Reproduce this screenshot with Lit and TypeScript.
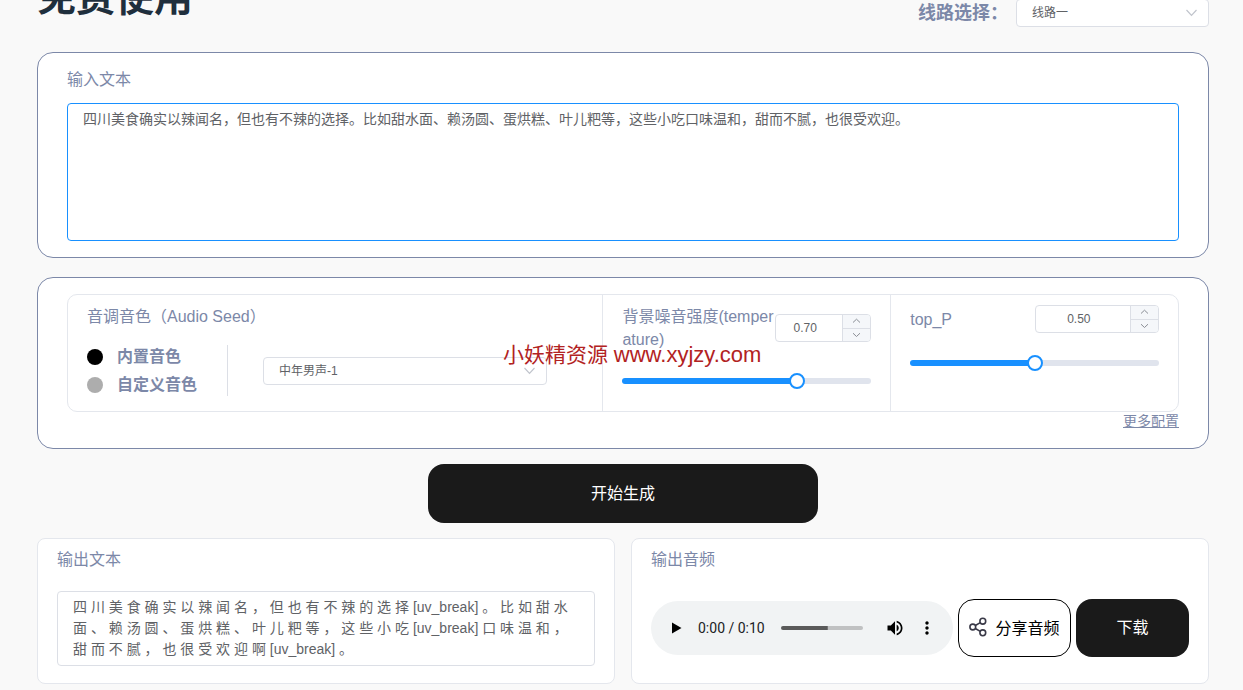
import { LitElement, html, css } from "lit";
import { customElement, property, state } from "lit/decorators.js";

const INPUT_TEXT =
  "四川美食确实以辣闻名，但也有不辣的选择。比如甜水面、赖汤圆、蛋烘糕、叶儿粑等，这些小吃口味温和，甜而不腻，也很受欢迎。";
const OUTPUT_TEXT =
  "四 川 美 食 确 实 以 辣 闻 名 ， 但 也 有 不 辣 的 选 择 [uv_break] 。 比 如 甜 水 面 、 赖 汤 圆 、 蛋 烘 糕 、 叶 儿 粑 等 ， 这 些 小 吃 [uv_break] 口 味 温 和 ， 甜 而 不 腻 ， 也 很 受 欢 迎 啊 [uv_break] 。";

const base = css`
  * {
    box-sizing: border-box;
  }
  button,
  input,
  select,
  textarea {
    font-family: inherit;
    margin: 0;
  }
`;

@customElement("param-slider")
export class ParamSlider extends LitElement {
  @property() label = "";
  @property({ type: Number }) value = 0.5;
  @property({ type: Boolean }) narrow = false;

  static styles = [
    base,
    css`
      :host {
        display: block;
        padding: 10px 19px;
      }
      .row {
        display: flex;
        align-items: center;
        margin-bottom: 27px;
      }
      .label {
        flex: 1;
        min-width: 0;
        font-size: 16px;
        line-height: 23px;
        color: #7c88a8;
        word-break: break-all;
      }
      .number {
        display: flex;
        width: 50%;
        height: 28px;
        border: 1px solid #dcdfe6;
        border-radius: 4px;
        background: #fff;
        overflow: hidden;
      }
      .number.narrow {
        width: 96px;
      }
      .field {
        flex: 1;
        min-width: 0;
        border: 0;
        outline: 0;
        padding: 0 8px 0 0;
        text-align: center;
        font-size: 12px;
        color: #606266;
        background: transparent;
      }
      .steps {
        display: grid;
        width: 28px;
        border-left: 1px solid #dcdfe6;
      }
      .step {
        display: flex;
        align-items: center;
        justify-content: center;
        padding: 0;
        border: 0;
        background: #f5f7fa;
      }
      .step + .step {
        border-top: 1px solid #dcdfe6;
      }
      .track {
        height: 6px;
        border-radius: 3px;
        background: linear-gradient(#1890ff, #1890ff) 0 0 / var(--fill) 100% no-repeat #e0e4ed;
      }
      .range {
        display: block;
        appearance: none;
        width: calc(100% + 16px);
        height: 16px;
        margin: 0 -8px;
        position: relative;
        top: -5px;
        background: transparent;
      }
      .range::-webkit-slider-thumb {
        appearance: none;
        width: 16px;
        height: 16px;
        border: 2px solid #1890ff;
        border-radius: 50%;
        background: #fff;
      }
    `,
  ];

  private shift(by: number) {
    this.value = Math.min(1, Math.max(0, this.value + by));
  }

  render() {
    return html`
      <div class="row">
        <label class="label" for="field">${this.label}</label>
        <div class="number ${this.narrow ? "narrow" : ""}">
          <input id="field" class="field" type="text" inputmode="decimal" .value=${this.value.toFixed(2)} />
          <div class="steps">
            <button class="step" aria-label="增加" @click=${() => this.shift(0.01)}>
              <svg width="9" height="6" viewBox="0 0 9 6" fill="none" stroke="#8a8d94"><path d="M1 4.5 4.5 1.2 8 4.5" /></svg>
            </button>
            <button class="step" aria-label="减少" @click=${() => this.shift(-0.01)}>
              <svg width="9" height="6" viewBox="0 0 9 6" fill="none" stroke="#8a8d94"><path d="M1 1.2 4.5 4.5 8 1.2" /></svg>
            </button>
          </div>
        </div>
      </div>
      <div class="track" style="--fill:${this.value * 100}%">
        <input
          class="range"
          type="range"
          min="0"
          max="1"
          step="0.01"
          aria-label=${this.label}
          .value=${String(this.value)}
          @input=${(e: Event) => (this.value = Number((e.target as HTMLInputElement).value))}
        />
      </div>
    `;
  }
}

@customElement("audio-bar")
export class AudioBar extends LitElement {
  static styles = [
    base,
    css`
      :host {
        display: flex;
        align-items: center;
        height: 54px;
        padding: 0 10px;
        border-radius: 27px;
        background: #f1f3f4;
      }
      .icon {
        display: flex;
        align-items: center;
        justify-content: center;
        width: 32px;
        height: 32px;
        padding: 0;
        border: 0;
        background: none;
      }
      .time {
        margin: 0 16px 0 5px;
        font-family: Roboto, sans-serif;
        font-size: 14px;
        color: #202124;
        white-space: nowrap;
      }
      .seek {
        flex: 1;
        min-width: 0;
        appearance: none;
        height: 4px;
        margin: 0 16px 0 0;
        border-radius: 2px;
        background: linear-gradient(#5a5a5a, #5a5a5a) 0 0 / 57% 100% no-repeat #c0c1c2;
      }
      .seek::-webkit-slider-thumb {
        appearance: none;
        width: 4px;
        height: 4px;
        background: transparent;
      }
    `,
  ];

  render() {
    return html`
      <button class="icon" aria-label="播放">
        <svg width="10" height="12" viewBox="0 0 10 12"><path d="M0 0.5v11L9.500 6z" /></svg>
      </button>
      <span class="time">0:00 / 0:10</span>
      <input class="seek" type="range" min="0" max="10" value="0" aria-label="进度" />
      <button class="icon" aria-label="音量">
        <svg width="20" height="20" viewBox="0 0 24 24">
          <path
            d="M3 9v6h4l5 5V4L7 9H3zm13.500 3c0-1.770-1.020-3.290-2.500-4.030v8.050c1.480-.730 2.500-2.250 2.500-4.020zM14 3.230v2.060c2.890.860 5 3.540 5 6.710s-2.110 5.850-5 6.710v2.060c4.010-.910 7-4.490 7-8.770s-2.990-7.860-7-8.770z"
          />
        </svg>
      </button>
      <button class="icon" aria-label="更多">
        <svg width="20" height="20" viewBox="0 0 24 24">
          <path
            d="M12 8c1.100 0 2-.900 2-2s-.900-2-2-2-2 .900-2 2 .900 2 2 2zm0 2c-1.100 0-2 .900-2 2s.900 2 2 2 2-.900 2-2-.900-2-2-2zm0 6c-1.100 0-2 .900-2 2s.900 2 2 2 2-.900 2-2-.900-2-2-2z"
          />
        </svg>
      </button>
    `;
  }
}

@customElement("app-root")
export class AppRoot extends LitElement {
  @state() private source = "builtin";

  static styles = [
    base,
    css`
      :host {
        display: block;
        position: relative;
        min-height: 100vh;
        overflow: hidden;
        padding: 0 34px 6px 37px;
        background: #f9f9f9;
        color: #7c88a8;
        font-family: "Liberation Sans", "Noto Sans CJK SC", sans-serif;
        font-size: 16px;
        line-height: 22px;
      }
      .header {
        display: flex;
        justify-content: space-between;
        align-items: flex-end;
        margin: -32px 0 25px;
      }
      .title {
        margin: 0;
        font-size: 39px;
        line-height: 59px;
        font-weight: 700;
        color: #1f2f3d;
      }
      .line {
        display: flex;
        align-items: center;
        gap: 8px;
      }
      .line-label {
        font-size: 18px;
        font-weight: 700;
      }
      .select {
        appearance: none;
        display: block;
        width: 100%;
        height: 28px;
        padding: 0 30px 0 15px;
        border: 1px solid #dcdfe6;
        border-radius: 4px;
        outline: 0;
        background: #fff;
        font-size: 12px;
        color: #606266;
      }
      .select-box {
        display: grid;
        align-items: center;
      }
      .select-box > * {
        grid-area: 1 / 1;
      }
      .select-box svg {
        justify-self: end;
        margin-right: 11px;
        pointer-events: none;
      }
      .line .select-box {
        width: 193px;
      }
      .panel {
        border: 1px solid #7c88a8;
        border-radius: 16px;
        background: #fff;
        padding: 16px 29px;
      }
      .caption {
        display: block;
      }
      .text {
        display: block;
        width: 100%;
        resize: none;
        outline: 0;
        overflow: hidden;
        padding: 5px 15px;
        border: 1px solid #dcdfe6;
        border-radius: 4px;
        background: #fff;
        font-size: 14px;
        line-height: 21px;
        color: #606266;
      }
      .text.source {
        height: 138px;
        margin-top: 12px;
        border-color: #1890ff;
      }
      .text.result {
        height: 75px;
        margin-top: 20px;
      }
      .settings {
        margin-top: 19px;
        padding-bottom: 17px;
      }
      .grid {
        display: grid;
        grid-template-columns: 13fr 7fr 7fr;
        border: 1px solid #e4e7ed;
        border-radius: 10px;
      }
      .grid > * + * {
        border-left: 1px solid #e4e7ed;
      }
      .voice {
        padding: 11px 55px 15px 19px;
      }
      .voice-row {
        display: flex;
        align-items: center;
        margin-top: 17px;
      }
      .radios {
        display: grid;
        width: 141px;
        height: 51px;
        align-content: center;
        border-right: 1px solid #dcdfe6;
        margin-right: 35px;
      }
      .radio {
        display: flex;
        align-items: center;
        gap: 14px;
        height: 28px;
        font-weight: 700;
      }
      .radio input {
        appearance: none;
        width: 16px;
        height: 16px;
        border-radius: 50%;
        background: #adadad;
      }
      .radio input:checked {
        background: #000;
      }
      .voice-row .select-box {
        flex: 1;
      }
      .more {
        display: block;
        width: fit-content;
        margin-left: auto;
        font-size: 14px;
        line-height: 19px;
        color: #7c88a8;
        text-decoration: underline;
      }
      .dark {
        padding: 0 0 4px;
        border: 0;
        border-radius: 16px;
        background: #1a1a1a;
        color: #fff;
        font-size: 16px;
      }
      .generate {
        display: block;
        width: 390px;
        height: 59px;
        margin: 15px auto;
      }
      .outputs {
        display: grid;
        grid-template-columns: 1fr 1fr;
        gap: 16px;
      }
      .card {
        min-width: 0;
        padding: 10px 19px 17px;
        border: 1px solid #e4e7ed;
        border-radius: 8px;
        background: #fff;
      }
      .player {
        display: flex;
        align-items: center;
        gap: 5px;
        margin-top: 28px;
      }
      .player audio-bar {
        flex: 1;
        min-width: 0;
      }
      .action {
        width: 113px;
        height: 58px;
      }
      .share {
        display: flex;
        align-items: center;
        justify-content: center;
        gap: 8px;
        padding: 0 0 2px;
        border: 1px solid #000;
        border-radius: 16px;
        background: #fff;
        color: #000;
        font-size: 16px;
      }
      .watermark {
        position: absolute;
        left: 503px;
        top: 340px;
        font-size: 21px;
        line-height: 30px;
        color: #b22222;
        white-space: nowrap;
        pointer-events: none;
      }
      .site {
        font-size: 22px;
      }
    `,
  ];

  private chevron() {
    return html`<svg width="13" height="8" viewBox="0 0 13 8" fill="none" stroke="#c0c4cc" stroke-width="1.2">
      <path d="M1.500 1 6.500 6.300 11.500 1" />
    </svg>`;
  }

  private radio(value: string, text: string) {
    return html`<label class="radio">
      <input
        type="radio"
        name="source"
        .checked=${this.source === value}
        @change=${() => (this.source = value)}
      />${text}
    </label>`;
  }

  render() {
    return html`
      <header class="header">
        <h1 class="title">免费使用</h1>
        <div class="line">
          <label class="line-label" for="line">线路选择：</label>
          <div class="select-box">
            <select id="line" class="select"><option>线路一</option></select>
            ${this.chevron()}
          </div>
        </div>
      </header>

      <section class="panel">
        <label class="caption" for="source">输入文本</label>
        <textarea id="source" class="text source" spellcheck="false" .value=${INPUT_TEXT}></textarea>
      </section>

      <section class="panel settings">
        <div class="grid">
          <div class="voice">
            <label class="caption" for="voice">音调音色（Audio Seed）</label>
            <div class="voice-row">
              <div class="radios">
                ${this.radio("builtin", "内置音色")} ${this.radio("custom", "自定义音色")}
              </div>
              <div class="select-box">
                <select id="voice" class="select"><option>中年男声-1</option></select>
                ${this.chevron()}
              </div>
            </div>
          </div>
          <param-slider label="背景噪音强度(temperature)" .value=${0.7} narrow></param-slider>
          <param-slider label="top_P" .value=${0.5}></param-slider>
        </div>
        <a class="more" href="#">更多配置</a>
      </section>

      <button class="dark generate">开始生成</button>

      <div class="outputs">
        <section class="card">
          <label class="caption" for="result">输出文本</label>
          <textarea id="result" class="text result" spellcheck="false" .value=${OUTPUT_TEXT}></textarea>
        </section>
        <section class="card">
          <span class="caption">输出音频</span>
          <div class="player">
            <audio-bar></audio-bar>
            <button class="action share">
              <svg width="18" height="20" viewBox="0 0 18 20" fill="none" stroke="#3a3a48" stroke-width="1.600">
                <circle cx="3.800" cy="10" r="2.900" />
                <circle cx="13.800" cy="4.200" r="2.900" />
                <circle cx="13.800" cy="15.800" r="2.900" />
                <path d="M6.300 8.500 11.300 5.600M6.300 11.500 11.300 14.400" />
              </svg>
              分享音频
            </button>
            <button class="dark action">下载</button>
          </div>
        </section>
      </div>

      <div class="watermark">小妖精资源 <span class="site">www.xyjzy.com</span></div>
    `;
  }
}
